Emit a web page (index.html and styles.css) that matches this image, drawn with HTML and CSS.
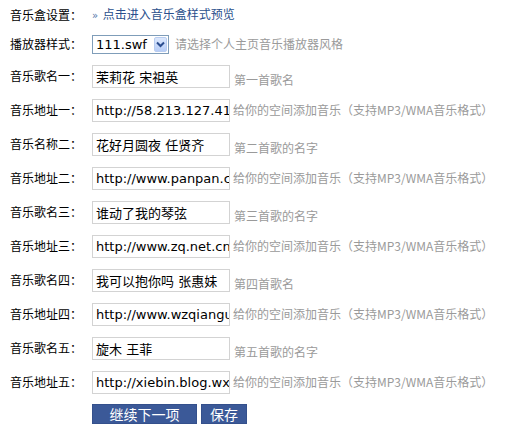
FILE: index.html
```html
<!DOCTYPE html>
<html lang="zh-CN">
<head>
<meta charset="utf-8">
<title>音乐盒设置</title>
<link rel="stylesheet" href="styles.css">
</head>
<body>
<div class="form">
  <div class="row r1">
    <span class="label">音乐盒设置：</span>
    <a class="link" href="#"><span class="raquo">»</span> 点击进入音乐盒样式预览</a>
  </div>
  <div class="row r2">
    <span class="label">播放器样式：</span>
    <span class="select"><span class="sel-text">111.swf</span><span class="sel-btn"><svg width="9" height="7" viewBox="0 0 9 7"><path d="M1 1.5 L4.5 5 L8 1.5" fill="none" stroke="#2a4d8f" stroke-width="2"/></svg></span></span>
    <span class="hint inline">请选择个人主页音乐播放器风格</span>
  </div>
  <div class="row r3">
    <span class="label">音乐歌名一：</span>
    <input class="field" type="text" value="茉莉花 宋祖英">
    <span class="hint low">第一首歌名</span>
  </div>
  <div class="row">
    <span class="label">音乐地址一：</span>
    <input class="field" type="text" value="http://58.213.127.41,8080/music/mlh.mp3">
    <span class="hint url">给你的空间添加音乐（支持MP3/WMA音乐格式）</span>
  </div>
  <div class="row">
    <span class="label">音乐名称二：</span>
    <input class="field" type="text" value="花好月圆夜 任贤齐">
    <span class="hint low">第二首歌的名字</span>
  </div>
  <div class="row">
    <span class="label">音乐地址二：</span>
    <input class="field" type="text" value="http://www.panpan.cn/music/hhyyy.mp3">
    <span class="hint url">给你的空间添加音乐（支持MP3/WMA音乐格式）</span>
  </div>
  <div class="row">
    <span class="label">音乐歌名三：</span>
    <input class="field" type="text" value="谁动了我的琴弦">
    <span class="hint low">第三首歌的名字</span>
  </div>
  <div class="row">
    <span class="label">音乐地址三：</span>
    <input class="field" type="text" value="http://www.zq.net.cn/music/sdlwdqx.mp3">
    <span class="hint url">给你的空间添加音乐（支持MP3/WMA音乐格式）</span>
  </div>
  <div class="row">
    <span class="label">音乐歌名四：</span>
    <input class="field" type="text" value="我可以抱你吗 张惠妹">
    <span class="hint low">第四首歌名</span>
  </div>
  <div class="row">
    <span class="label">音乐地址四：</span>
    <input class="field" type="text" value="http://www.wzqiangui.com/music/wkybnm.mp3">
    <span class="hint url">给你的空间添加音乐（支持MP3/WMA音乐格式）</span>
  </div>
  <div class="row">
    <span class="label">音乐歌名五：</span>
    <input class="field" type="text" value="旋木 王菲">
    <span class="hint low">第五首歌的名字</span>
  </div>
  <div class="row">
    <span class="label">音乐地址五：</span>
    <input class="field" type="text" value="http://xiebin.blog.wxjy.com/music/xm.mp3">
    <span class="hint url">给你的空间添加音乐（支持MP3/WMA音乐格式）</span>
  </div>
  <div class="row buttons">
    <span class="label"></span>
    <button class="btn btn-next" type="button">继续下一项</button>
    <button class="btn btn-save" type="button">保存</button>
  </div>
</div>
</body>
</html>
```
FILE: styles.css
```css
html, body {
  margin: 0;
  padding: 0;
  background: #ffffff;
}
body {
  font-family: "Noto Sans CJK SC", "DejaVu Sans", sans-serif;
  font-size: 12px;
  color: #000000;
  width: 520px;
  height: 424px;
  overflow: hidden;
}
.form {
  display: flex;
  flex-direction: column;
  padding-left: 10px;
}
.row {
  display: flex;
  align-items: center;
  height: 24px;
  margin-top: 10px;
  white-space: nowrap;
}
.row.r1 { margin-top: 3px; }
.row.r2 { margin-top: 5px; }
.row.r3 { margin-top: 8px; }
.label {
  width: 82px;
  flex: none;
  line-height: 16px;
  color: #000;
}
.link {
  color: #2a4f8c;
  text-decoration: none;
  line-height: 16px;
}
.raquo {
  font-family: "DejaVu Sans", sans-serif;
  font-size: 10px;
  color: #5577aa;
  margin-right: 2px;
}
.select {
  display: inline-flex;
  align-items: center;
  box-sizing: border-box;
  width: 77px;
  height: 19px;
  border: 1px solid #7f9db9;
  background: #fff;
  padding: 0 1px 0 3px;
  flex: none;
}
.sel-text {
  flex: 1;
  font-family: "DejaVu Sans", sans-serif;
  font-size: 13px;
  line-height: 15px;
  color: #000;
}
.sel-btn {
  width: 13px;
  height: 15px;
  box-sizing: border-box;
  border: 1px solid #b9cdf0;
  border-radius: 2px;
  background: linear-gradient(#dce8fd, #b7cdf7);
  display: flex;
  align-items: center;
  justify-content: center;
}
.sel-btn svg { display: block; }
.hint {
  color: #9a9a9a;
  line-height: 16px;
}
.hint.inline { margin-left: 6px; }
.hint.low {
  align-self: flex-end;
  margin-left: 4px;
}
.hint.url { margin-left: 3px; }
.field {
  box-sizing: border-box;
  width: 138px;
  height: 23px;
  margin: 0;
  border: 1px solid #d3d3d3;
  padding: 0 0 0 3px;
  font-family: "DejaVu Sans", "Noto Sans CJK SC", sans-serif;
  font-size: 13px;
  color: #000;
  background: #fff;
  outline: none;
  flex: none;
}
.buttons {
  height: 20px;
  margin-top: 10px;
}
.btn {
  height: 20px;
  margin: 0;
  padding: 0;
  border: 1px solid #34508c;
  background: #3b5998;
  color: #ffffff;
  font-family: "Noto Sans CJK SC", sans-serif;
  font-size: 14px;
  line-height: 18px;
  cursor: pointer;
}
.btn-next { width: 105px; }
.btn-save { width: 46px; margin-left: 4px; }
```
